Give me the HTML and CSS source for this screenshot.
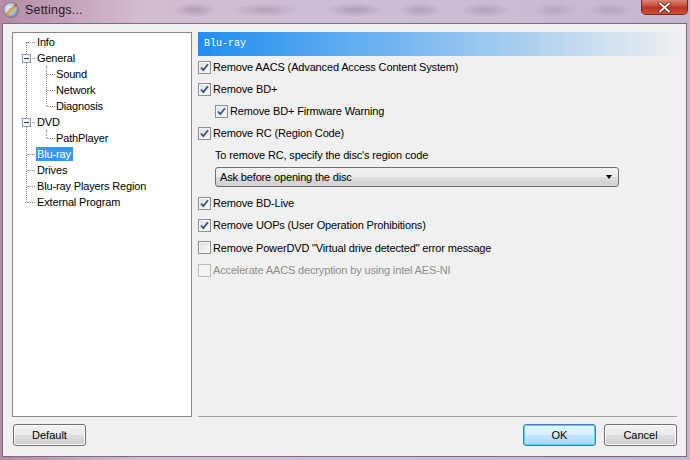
FILE: index.html
```html
<!DOCTYPE html>
<html lang="en">
<head>
    <meta charset="UTF-8">
    <title>Settings...</title>
    <link rel="stylesheet" href="styles.css">
</head>
<body>
    <div class="window">
        <div class="titlebar">
            <svg class="app-icon" width="16" height="16" viewBox="0 0 16 16">
                <defs>
                    <radialGradient id="disc" cx="40%" cy="40%" r="60%">
                        <stop offset="0" stop-color="#f4f6fa"/>
                        <stop offset="0.6" stop-color="#b9c3d3"/>
                        <stop offset="1" stop-color="#7d8aa0"/>
                    </radialGradient>
                </defs>
                <circle cx="8" cy="8" r="7.5" fill="url(#disc)" stroke="#6e7486" stroke-width="0.8"/>
                <circle cx="8" cy="8" r="2" fill="#e7e9ee" stroke="#7c8496" stroke-width="0.6"/>
                <path d="M3 13 L12.5 3.5" stroke="#d9891c" stroke-width="2.4" stroke-linecap="round"/>
                <path d="M4 12 L11 5" stroke="#f6c24a" stroke-width="1"/>
                <path d="M11.5 3 L14 1.5 L13 4.5 Z" fill="#b8321e"/>
            </svg>
            <span class="title">Settings...</span>
            <button class="close-btn">
                <svg width="13" height="11" viewBox="0 0 13 11">
                    <path d="M2 1.5 L11 9.5 M11 1.5 L2 9.5" stroke="#5a2a26" stroke-width="3.4" stroke-linecap="square"/>
                    <path d="M2 1.5 L11 9.5 M11 1.5 L2 9.5" stroke="#ffffff" stroke-width="1.8" stroke-linecap="square"/>
                </svg>
            </button>
        </div>

        <div class="client">
            <div class="main">
                <div class="tree">
                    <ul class="tree-root">
                        <li><div class="row"><span class="label">Info</span></div></li>
                        <li>
                            <div class="row"><span class="toggle"></span><span class="label">General</span></div>
                            <ul class="tree-sub">
                                <li><div class="row"><span class="label">Sound</span></div></li>
                                <li><div class="row"><span class="label">Network</span></div></li>
                                <li><div class="row"><span class="label">Diagnosis</span></div></li>
                            </ul>
                        </li>
                        <li>
                            <div class="row"><span class="toggle"></span><span class="label">DVD</span></div>
                            <ul class="tree-sub">
                                <li><div class="row"><span class="label">PathPlayer</span></div></li>
                            </ul>
                        </li>
                        <li><div class="row"><span class="label selected">Blu-ray</span></div></li>
                        <li><div class="row"><span class="label">Drives</span></div></li>
                        <li><div class="row"><span class="label">Blu-ray Players Region</span></div></li>
                        <li><div class="row"><span class="label">External Program</span></div></li>
                    </ul>
                </div>

                <div class="panel">
                    <div class="panel-head">Blu-ray</div>
                    <div class="panel-body">
                        <label class="opt"><span class="cb on"><svg width="11" height="11" viewBox="0 0 11 11"><path d="M2 5.5 L4.3 8 L9 2.2" fill="none" stroke="#3d4f82" stroke-width="1.8"/></svg></span>Remove AACS (Advanced Access Content System)</label>
                        <label class="opt"><span class="cb on"><svg width="11" height="11" viewBox="0 0 11 11"><path d="M2 5.5 L4.3 8 L9 2.2" fill="none" stroke="#3d4f82" stroke-width="1.8"/></svg></span>Remove BD+</label>
                        <label class="opt sub"><span class="cb on"><svg width="11" height="11" viewBox="0 0 11 11"><path d="M2 5.5 L4.3 8 L9 2.2" fill="none" stroke="#3d4f82" stroke-width="1.8"/></svg></span>Remove BD+ Firmware Warning</label>
                        <label class="opt"><span class="cb on"><svg width="11" height="11" viewBox="0 0 11 11"><path d="M2 5.5 L4.3 8 L9 2.2" fill="none" stroke="#3d4f82" stroke-width="1.8"/></svg></span>Remove RC (Region Code)</label>
                        <div class="opt sub">To remove RC, specify the disc's region code</div>
                        <div class="select">
                            <span>Ask before opening the disc</span>
                            <span class="arrow"></span>
                        </div>
                        <label class="opt gap"><span class="cb on"><svg width="11" height="11" viewBox="0 0 11 11"><path d="M2 5.5 L4.3 8 L9 2.2" fill="none" stroke="#3d4f82" stroke-width="1.8"/></svg></span>Remove BD-Live</label>
                        <label class="opt"><span class="cb on"><svg width="11" height="11" viewBox="0 0 11 11"><path d="M2 5.5 L4.3 8 L9 2.2" fill="none" stroke="#3d4f82" stroke-width="1.8"/></svg></span>Remove UOPs (User Operation Prohibitions)</label>
                        <label class="opt tall"><span class="cb"></span>Remove PowerDVD "Virtual drive detected" error message</label>
                        <label class="opt disabled"><span class="cb"></span>Accelerate AACS decryption by using intel AES-NI</label>
                    </div>
                </div>
            </div>

            <div class="actions">
                <button class="btn">Default</button>
                <span class="spacer"></span>
                <button class="btn primary">OK</button>
                <button class="btn">Cancel</button>
            </div>
        </div>
    </div>
</body>
</html>
```

FILE: styles.css
```css
body {
    margin: 0;
    width: 690px;
    height: 460px;
    overflow: hidden;
    font-family: 'Liberation Sans', Arial, sans-serif;
    font-size: 11px;
    letter-spacing: -0.15px;
    color: #000;
}
.window {
    height: 460px;
    display: flex;
    flex-direction: column;
    background:
        radial-gradient(ellipse 22px 7px at 195px 10px, rgba(110,100,125,0.35), transparent),
        radial-gradient(ellipse 35px 7px at 265px 10px, rgba(120,100,120,0.3), transparent),
        radial-gradient(ellipse 30px 7px at 355px 10px, rgba(110,100,125,0.35), transparent),
        radial-gradient(ellipse 22px 7px at 420px 10px, rgba(110,100,125,0.3), transparent),
        radial-gradient(ellipse 25px 7px at 485px 10px, rgba(110,100,125,0.3), transparent),
        radial-gradient(ellipse 22px 7px at 555px 10px, rgba(110,100,125,0.25), transparent),
        radial-gradient(ellipse 22px 7px at 610px 10px, rgba(110,100,125,0.25), transparent),
        linear-gradient(90deg, #b48aa5 0, #d3bccd 20%, #cdbfd5 45%, #c9bdd4 75%, #c4b8d0 100%);
}
.titlebar {
    height: 23px;
    display: flex;
    align-items: flex-start;
}
.app-icon {
    margin: 2px 0 0 3px;
}
.title {
    margin: 3px 0 0 6px;
    font-size: 12.5px;
    color: #1b1b1f;
    letter-spacing: 0.2px;
}
.close-btn {
    margin-left: auto;
    margin-right: 2px;
    width: 47px;
    height: 15px;
    padding: 0;
    border: 1px solid #6c2c28;
    border-top: none;
    border-radius: 0 0 5px 5px;
    background: linear-gradient(#d98574 0, #c9503d 40%, #b8321f 55%, #cf5438 100%);
    display: flex;
    align-items: center;
    justify-content: center;
}

.client {
    flex: 1;
    margin: 0 3px 3px 2px;
    border: 1px solid #7a6e80;
    background-color: #f0f0f0;
    display: flex;
    flex-direction: column;
}
.main {
    display: flex;
    padding: 8px 0 0 9px;
}

/* tree */
.tree {
    width: 180px;
    height: 385px;
    box-sizing: border-box;
    background-color: #fff;
    border: 1px solid #828790;
}
.tree ul {
    list-style: none;
    margin: 0;
    padding: 0;
    position: relative;
}
.tree-root {
    padding-top: 1px !important;
}
.tree-root::before {
    content: '';
    position: absolute;
    left: 13px;
    top: 9px;
    bottom: 8px;
    border-left: 1px dotted #8a8a8a;
}
.tree-sub::before {
    content: '';
    position: absolute;
    left: 33px;
    top: 0;
    bottom: 8px;
    border-left: 1px dotted #8a8a8a;
}
.row {
    height: 16px;
    display: flex;
    align-items: center;
    position: relative;
    padding-left: 23px;
}
.row::before {
    content: '';
    position: absolute;
    left: 14px;
    top: 8px;
    width: 8px;
    border-top: 1px dotted #8a8a8a;
}
.tree-sub .row {
    padding-left: 42px;
}
.tree-sub .row::before {
    left: 34px;
}
.toggle {
    position: absolute;
    left: 9px;
    top: 4px;
    width: 9px;
    height: 9px;
    box-sizing: border-box;
    border: 1px solid #8d9bb2;
    background: linear-gradient(135deg, #ffffff, #e4e8ee);
    z-index: 1;
}
.toggle::after {
    content: '';
    position: absolute;
    left: 1px;
    top: 3px;
    width: 5px;
    height: 1px;
    background-color: #1f3a8c;
}
.label {
    line-height: 14px;
    padding: 0 2px 0 1px;
    white-space: nowrap;
}
.label.selected {
    background-color: #3399ff;
    color: #fff;
}

/* right panel */
.panel {
    flex: 1;
    margin-left: 6px;
    display: flex;
    flex-direction: column;
}
.panel-head {
    height: 24px;
    line-height: 24px;
    padding-left: 6px;
    font-family: 'Liberation Mono', monospace;
    font-size: 10px;
    letter-spacing: 0;
    color: #fff;
    background: linear-gradient(90deg, #1e8ef0 0, #f0f0f0 99%);
}
.panel-body {
    flex: 1;
    margin-right: 9px;
    border-bottom: 1px solid #a0a0a0;
}
.opt {
    height: 22px;
    display: flex;
    align-items: center;
    white-space: nowrap;
}
.opt.tall {
    height: 23px;
}
.opt.sub {
    padding-left: 17px;
}
.opt.gap {
    margin-top: 5px;
}
.opt.disabled {
    color: #8d8d8d;
}
.cb {
    width: 13px;
    height: 13px;
    box-sizing: border-box;
    margin-right: 2px;
    border: 1px solid #8e8f8f;
    background: linear-gradient(135deg, #dcdee2, #fbfbfb);
    box-shadow: inset 0 0 0 1px #f4f4f4;
    display: flex;
    align-items: center;
    justify-content: center;
}
.disabled .cb {
    border-color: #bcbcbc;
    background: #f4f4f4;
}
.select {
    margin: 1px 0 0 17px;
    width: 404px;
    height: 20px;
    box-sizing: border-box;
    border: 1px solid #707070;
    border-radius: 3px;
    background: linear-gradient(#f2f2f2 0, #ebebeb 48%, #dddddd 52%, #cfcfcf 100%);
    display: flex;
    align-items: center;
    justify-content: space-between;
    padding: 0 6px 0 4px;
}
.arrow {
    width: 0;
    height: 0;
    border-left: 3.5px solid transparent;
    border-right: 3.5px solid transparent;
    border-top: 4px solid #000;
}

/* buttons */
.actions {
    display: flex;
    gap: 8px;
    padding: 7px 9px 0 10px;
}
.spacer {
    flex: 1;
}
.btn {
    width: 73px;
    height: 22px;
    padding: 0;
    font-family: 'Liberation Sans', Arial, sans-serif;
    font-size: 11px;
    color: #000;
    border: 1px solid #707070;
    border-radius: 3px;
    background: linear-gradient(#f2f2f2 0, #ebebeb 48%, #dddddd 52%, #cfcfcf 100%);
    box-shadow: inset 0 0 0 1px #fbfbfb;
}
.btn.primary {
    border-color: #3c7fb1;
    box-shadow: inset 0 0 0 1px #48d7fb;
    background: linear-gradient(#eaf6fd 0, #d9f0fc 48%, #bee6fd 52%, #a7d9f5 100%);
}
```
